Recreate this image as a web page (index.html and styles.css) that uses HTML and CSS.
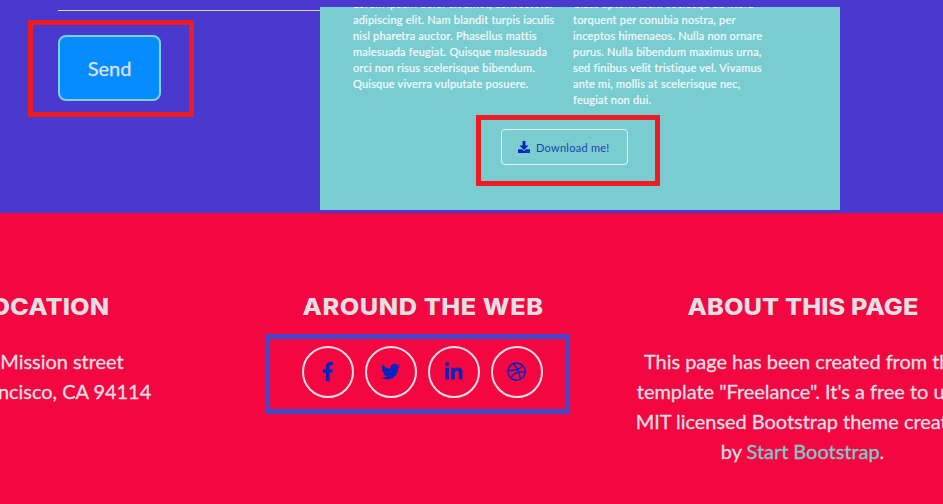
FILE: index.html
```html
<!DOCTYPE html>
<html lang="en">
<head>
<meta charset="utf-8">
<title>Contact</title>
<link rel="stylesheet" href="styles.css">
</head>
<body>
<section class="contact">
  <form class="form">
    <div class="rule"></div>
    <div class="mark mark-send"><button type="button" class="send">Send</button></div>
  </form>
  <article class="modal">
    <div class="columns">
      <p>Lorem ipsum dolor sit amet, consectetur<br>adipiscing elit. Nam blandit turpis iaculis<br>nisl pharetra auctor. Phasellus mattis<br>malesuada feugiat. Quisque malesuada<br>orci non risus scelerisque bibendum.<br>Quisque viverra vulputate posuere.</p>
      <p>Class aptent taciti sociosqu ad litora<br>torquent per conubia nostra, per<br>inceptos himenaeos. Nulla non ornare<br>purus. Nulla bibendum maximus urna,<br>sed finibus velit tristique vel. Vivamus<br>ante mi, mollis at scelerisque nec,<br>feugiat non dui.</p>
    </div>
    <div class="mark mark-download">
      <a class="download"><svg viewBox="0 0 512 512" width="12" height="12"><path d="M216 0h80c13.300 0 24 10.700 24 24v168h87.700c17.800 0 26.700 21.500 14.100 34.100L269.700 378.300c-7.500 7.500-19.800 7.500-27.300 0L90.100 226.100c-12.600-12.600-3.700-34.100 14.100-34.100H192V24c0-13.300 10.700-24 24-24zm296 376v112c0 13.300-10.700 24-24 24H24c-13.300 0-24-10.700-24-24V376c0-13.300 10.700-24 24-24h146.700l49 49c20.100 20.100 52.500 20.100 72.600 0l49-49H488c13.300 0 24 10.700 24 24zm-124 88c0-11-9-20-20-20s-20 9-20 20 9 20 20 20 20-9 20-20zm64 0c0-11-9-20-20-20s-20 9-20 20 9 20 20 20 20-9 20-20z"/></svg><span>Download me!</span></a>
    </div>
  </article>
</section>
<footer class="footer">
  <section class="col">
    <h4 class="h-location">LOCATION</h4>
    <p><span class="street">Mission street</span><br>San Francisco, CA 94114</p>
  </section>
  <section class="col">
    <h4 class="h-web">AROUND THE WEB</h4>
    <div class="social">
      <a><svg viewBox="0 0 320 512" width="12" height="19.200"><path d="M279.140 288l14.220-92.660h-88.910v-60.130c0-25.350 12.420-50.060 52.240-50.060h40.420V6.260S260.430 0 225.360 0c-73.220 0-121.080 44.380-121.080 124.720v70.620H22.890V288h81.390v224h100.170V288z"/></svg></a>
      <a><svg viewBox="0 0 512 512" width="19.200" height="19.200"><path d="M459.370 151.716c.325 4.548.325 9.097.325 13.645 0 138.720-105.583 298.558-298.558 298.558-59.452 0-114.680-17.219-161.137-47.106 8.447.974 16.568 1.299 25.340 1.299 49.055 0 94.213-16.568 130.274-44.832-46.132-.975-84.792-31.188-98.112-72.772 6.498.974 12.995 1.624 19.818 1.624 9.421 0 18.843-1.300 27.614-3.573-48.081-9.747-84.143-51.980-84.143-102.985v-1.299c13.969 7.797 30.214 12.670 47.431 13.319-28.264-18.843-46.781-51.005-46.781-87.391 0-19.492 5.197-37.360 14.294-52.954 51.655 63.675 129.300 105.258 216.365 109.807-1.624-7.797-2.599-15.918-2.599-24.040 0-57.828 46.782-104.934 104.934-104.934 30.213 0 57.502 12.670 76.670 33.137 23.715-4.548 46.456-13.320 66.599-25.340-7.798 24.366-24.366 44.833-46.132 57.827 21.117-2.273 41.584-8.122 60.426-16.243-14.292 20.791-32.161 39.308-52.628 54.253z"/></svg></a>
      <a><svg viewBox="0 0 448 512" width="17.500" height="20"><path d="M100.280 448H7.400V148.900h92.880zM53.790 108.100C24.090 108.100 0 83.500 0 53.800a53.790 53.790 0 0 1 107.580 0c0 29.700-24.100 54.300-53.790 54.300zM447.900 448h-92.680V302.400c0-34.700-.7-79.200-48.290-79.200-48.290 0-55.690 37.700-55.690 76.700V448h-92.780V148.900h89.080v40.800h1.300c12.400-23.500 42.690-48.300 87.880-48.300 94 0 111.280 61.900 111.280 142.300V448z"/></svg></a>
      <a><svg viewBox="0 0 512 512" width="19.200" height="19.200"><path d="M256 8C119.252 8 8 119.252 8 256s111.252 248 248 248 248-111.252 248-248S392.748 8 256 8zm163.970 114.366c29.503 36.046 47.369 81.957 47.835 131.955-6.984-1.477-77.018-15.682-147.502-6.818-5.752-14.041-11.181-26.393-18.617-41.614 78.321-31.977 113.818-77.482 118.284-83.523zM396.421 97.870c-3.810 5.427-35.697 48.286-111.021 76.519-34.712-63.776-73.185-116.168-79.040-124.008 67.176-16.193 137.966 1.270 190.061 47.489zm-230.480-33.250c5.585 7.659 43.438 60.116 78.537 122.509-99.087 26.313-186.360 25.934-195.834 25.809C62.380 147.205 106.678 92.573 165.941 64.620zM44.170 256.323c0-2.166.043-4.322.108-6.473 9.268.19 111.920 1.513 217.706-30.146 6.064 11.868 11.857 23.915 17.174 35.949-76.599 21.575-146.194 83.527-180.531 142.306C64.794 360.405 44.170 310.730 44.170 256.323zm81.807 167.113c22.127-45.233 82.178-103.622 167.579-132.756 29.740 77.283 42.039 142.053 45.189 160.638-68.112 29.013-150.015 21.053-212.768-27.882zm248.380 8.489c-2.171-12.886-13.446-74.897-41.152-151.033 66.380-10.626 124.700 6.768 131.947 9.055-9.442 58.941-43.273 109.844-90.795 141.978z"/></svg></a>
    </div>
  </section>
  <section class="col">
    <h4 class="h-about">ABOUT THIS PAGE</h4>
    <p>This page has been created from the<br>template "Freelance". It's a free to use,<br>MIT licensed Bootstrap theme created<br>by <a class="link">Start Bootstrap</a>.</p>
  </section>
</footer>
</body>
</html>
```
FILE: styles.css
```css
* { box-sizing: border-box; }
body {
  margin: 0;
  width: 943px;
  height: 504px;
  overflow: hidden;
  background: #f40741;
  font-family: Lato, sans-serif;
}
p, h4 { margin: 0; }
.contact {
  display: grid;
  grid-template-columns: 320px 520px;
  height: 213px;
  background: #4a39ce;
}
.form { padding-top: 10px; }
.rule {
  height: 1px;
  margin-left: 58px;
  background: #d5d7df;
}
.mark { border: 5px solid #ed1c24; }
.mark-send {
  width: 166px;
  height: 97px;
  margin: 9px 0 0 28px;
  padding: 10px 25px;
}
.send {
  display: block;
  width: 103px;
  height: 66px;
  padding: 0;
  border: 2px solid #7cd3dc;
  border-radius: 8px;
  background: #058cff;
  color: #dfe1e8;
  font: 20px Lato, sans-serif;
  -webkit-text-stroke: 0.3px;
}
.modal {
  height: 203px;
  margin-top: 7px;
  overflow: hidden;
  background: #79cdd0;
}
.columns {
  display: grid;
  grid-template-columns: 220px 220px;
  height: 112px;
  margin: -11px 0 0 33px;
  color: #f5fbfb;
  font-size: 11px;
  letter-spacing: 0.21px;
  line-height: 16px;
  white-space: nowrap;
  -webkit-text-stroke: 0.2px;
}
.mark-download {
  width: 184px;
  height: 71px;
  margin: 7px 0 0 156px;
  padding: 9px 20px;
}
.download {
  display: flex;
  align-items: center;
  gap: 6px;
  width: 127px;
  height: 36px;
  padding-left: 16px;
  border: 1.500px solid #e4f4f5;
  border-radius: 4px;
  color: #1f43ae;
  font-size: 11px;
  letter-spacing: 0.27px;
  white-space: nowrap;
}
.download svg { fill: #0324b4; }
.footer {
  display: grid;
  grid-template-columns: repeat(3, 380px);
  margin-left: -147.500px;
  padding-top: 80px;
  color: #e4dfe2;
  text-align: center;
}
.col p {
  margin-top: 24px;
  font-size: 20px;
  letter-spacing: -0.04px;
  line-height: 30px;
  white-space: nowrap;
  -webkit-text-stroke: 0.3px;
}
h4 {
  height: 29px;
  font: 800 23px/29px Inter, sans-serif;
  white-space: nowrap;
  transform: scaleX(1.1);
}
.h-location { letter-spacing: 0.1px; }
.h-web { letter-spacing: 0.5px; }
.h-about { letter-spacing: 0.1px; }
.street { padding-left: 39px; }
.social {
  display: flex;
  gap: 11px;
  width: 305px;
  height: 80px;
  margin: 12px 0 0 32.500px;
  padding: 7px 0 0 32px;
  border: 5px solid #4646c8;
}
.social a {
  display: flex;
  align-items: center;
  justify-content: center;
  width: 52px;
  height: 52px;
  border: 2px solid #e4dfe2;
  border-radius: 50%;
}
.social svg { fill: #0324c0; }
.link { color: #84c9cf; }
```
